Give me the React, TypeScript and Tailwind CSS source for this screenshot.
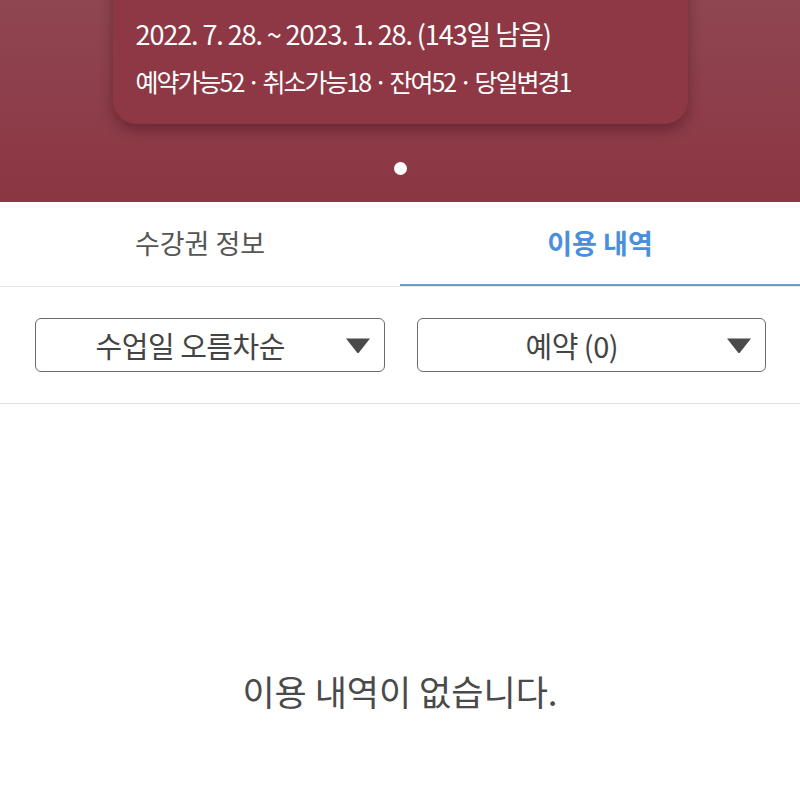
import React from "react";

function Caret() {
  return (
    <svg width="26" height="17" viewBox="0 0 26 17" className="shrink-0">
      <path d="M1 1.5 H25 L14 15.5 Q13 16.5 12 15.5 Z" fill="#4a4a4a" />
    </svg>
  );
}

function Select({ label }: { label: string }) {
  return (
    <div className="flex h-[54px] flex-1 items-center rounded-[6px] border-[1.5px] border-[#6b6b6b] bg-white pr-[13px]">
      <span className="flex-1 text-center text-[29px] leading-none tracking-[-0.5px] text-[#444]">{label}</span>
      <Caret />
    </div>
  );
}

export default function App() {
  return (
    <div
      className="min-h-[800px] w-full bg-white"
      style={{ fontFamily: '"Noto Sans CJK KR", "Noto Sans", sans-serif' }}
    >
      <div className="flex h-[202px] flex-col items-center overflow-hidden bg-gradient-to-b from-[#8f4651] to-[#8b3643]">
        <div className="mt-[-40px] flex h-[164px] w-[575px] flex-col justify-end rounded-b-[24px] bg-[#8e3845] pb-[30px] pl-[23px] shadow-[0_6px_14px_rgba(40,0,10,0.35)]">
          <div className="text-[27px] leading-none tracking-[-1.1px] text-white">
            2022. 7. 28. ~ 2023. 1. 28. (143일 남음)
          </div>
          <div className="mt-[22px] text-[25px] leading-none tracking-[-2px] text-white">
            예약가능52 · 취소가능18 · 잔여52 · 당일변경1
          </div>
        </div>
        <div className="mt-[38px] h-[13px] w-[13px] rounded-full bg-white" />
      </div>

      <div className="flex border-b border-[#e4e4e4]">
        <div className="flex h-[84px] flex-1 items-center justify-center pb-[2px] text-[27px] text-[#555]">
          수강권 정보
        </div>
        <div className="flex h-[84px] flex-1 items-center justify-center border-b-[2px] border-[#6b9bd2] text-[27px] font-bold text-[#4a8fdb]">
          이용 내역
        </div>
      </div>

      <div className="flex gap-[32px] border-b border-[#e0e0e0] pb-[31px] pl-[35px] pr-[34px] pt-[31px]">
        <Select label="수업일 오름차순" />
        <Select label="예약 (0)" />
      </div>

      <div className="flex justify-center pt-[269px] text-[35px] leading-none text-[#4a4a4a]">
        이용 내역이 없습니다.
      </div>
    </div>
  );
}
